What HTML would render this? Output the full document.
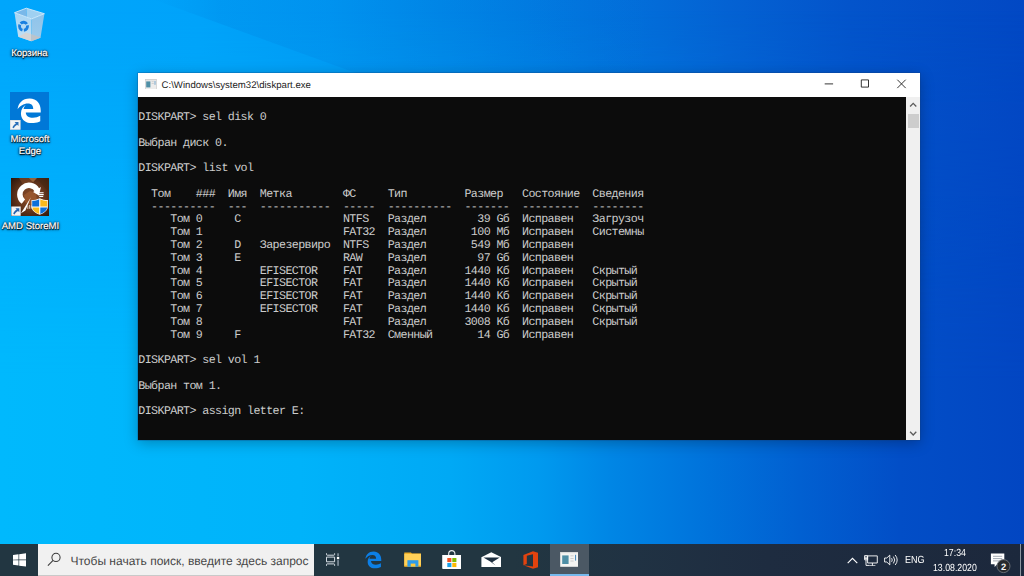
<!DOCTYPE html>
<html lang="ru">
<head>
<meta charset="utf-8">
<title>diskpart</title>
<style>
*{box-sizing:border-box}
html,body{margin:0;padding:0}
body{width:1024px;height:576px;overflow:hidden;position:relative;text-rendering:geometricPrecision;font-family:"Liberation Sans",sans-serif;background:#0a7fdc}
#wall{position:absolute;left:0;top:0;width:1024px;height:576px;
 background:linear-gradient(90deg,rgb(0,166,252) 0,rgb(0,163,250) 200px,rgb(0,153,244) 330px,rgb(0,137,233) 440px,rgb(2,116,221) 590px,rgb(4,98,211) 728px,rgb(3,84,203) 850px,rgb(2,72,196) 1024px)}
#wall2{position:absolute;left:0;top:0;width:1024px;height:576px;
 background:linear-gradient(90deg,rgb(0,185,253) 0,rgb(0,179,250) 300px,rgb(0,169,245) 450px,rgb(0,154,239) 538px,rgb(0,134,229) 610px,rgb(0,116,220) 700px,rgb(1,96,209) 800px,rgb(2,78,199) 900px,rgb(2,70,194) 1024px);
 -webkit-mask-image:linear-gradient(180deg,transparent 10px,#000 380px);mask-image:linear-gradient(180deg,transparent 10px,#000 380px)}
.abs{position:absolute}
#ray1{position:absolute;left:0;top:0;width:1024px;height:80px;clip-path:polygon(155px 0,375px 80px,660px 80px,660px 0);background:linear-gradient(90deg,rgba(0,60,170,0) 150px,rgba(0,60,170,.085) 220px,rgba(0,60,170,.06) 400px,rgba(0,60,170,0) 660px)}
/* desktop icons */
.dlabel{position:absolute;color:#fff;font-size:9.6px;line-height:12px;text-align:center;white-space:nowrap;
 text-shadow:0.5px 0.8px 1px #000,0 0 1.5px rgba(0,0,20,.95),0 0 2.5px rgba(0,0,30,.8),0 1px 3px rgba(0,0,30,.6);-webkit-text-stroke:0.2px #fff}
/* window */
#win{position:absolute;left:138px;top:72.5px;width:782.2px;height:367.7px;background:#0c0c0c;box-shadow:0 0 0 0.5px rgba(20,60,120,.5),0 3px 13px rgba(0,0,0,.27)}
#tbar{position:absolute;left:0;top:0;width:100%;height:24.3px;background:#fff}
#title{position:absolute;left:23.6px;top:7.1px;font-size:9.6px;line-height:12px;color:#1c1c1c;white-space:nowrap}
#con{position:absolute;left:0;top:24.3px;width:768px;height:343.4px;background:#0c0c0c;overflow:hidden}
#con .r{position:absolute;left:0.3px;height:13px;line-height:13px;font-family:"Liberation Mono",monospace;font-size:11.68px;letter-spacing:-0.609px;color:#ccc;white-space:pre;margin:0}
#sb{position:absolute;right:0;top:24.3px;width:14.2px;height:343.4px;background:#f0f0f0}
#thumb{position:absolute;left:1.7px;top:17.6px;width:11px;height:13.2px;background:#cdcdcd}
/* taskbar */
#task{position:absolute;left:0;top:544px;width:1024px;height:32px;background:linear-gradient(90deg,#223641 0%,#223641 50%,#203243 62%,#1e2c40 75%,#1c283c 100%)}
#search{position:absolute;left:38.4px;top:0.4px;width:275.2px;height:31.6px;background:#f1f1f1;border-bottom:1px solid #c9c9c9}
#stext{position:absolute;left:32.1px;top:9.3px;font-size:12px;line-height:15px;color:#474747;white-space:nowrap}
#active{position:absolute;left:550.3px;top:0;width:38.7px;height:32px;background:#4b5864}
#active i{position:absolute;left:0;bottom:0;width:100%;height:2px;background:#76b9ed}
.tray{position:absolute;color:#fff;font-size:10.3px;line-height:11px;white-space:nowrap;transform-origin:0 50%}
</style>
</head>
<body>
<div id="wall"></div><div id="wall2"></div>
<div id="ray1"></div>

<!-- DESKTOP ICONS -->
<div id="desk">
 <!-- recycle bin -->
 <svg class="abs" style="left:12px;top:6px" width="36" height="37" viewBox="12 6 36 37">
  <defs><linearGradient id="rbL" x1="0" y1="0" x2="0" y2="1"><stop offset="0" stop-color="#a6d4f3"/><stop offset="1" stop-color="#c3e1f5"/></linearGradient>
  <linearGradient id="rbR" x1="0" y1="0" x2="0" y2="1"><stop offset="0" stop-color="#8ec3ea"/><stop offset="1" stop-color="#9ecbeb"/></linearGradient></defs>
  <path fill="#79b8e9" d="M14.5 12.7L26.3 8.2 27 17.200z"/>
  <path fill="#9fd0f1" d="M26.3 8.2L44.4 13.7 31.5 18.9 27 17.200z"/>
  <path fill="url(#rbL)" d="M14.5 12.7L31.5 18.9 31.3 41.2 18.2 36.7z"/>
  <path fill="url(#rbR)" d="M31.5 18.9L44.4 13.7 40.500 37.700 31.3 41.2z"/>
  <path fill="#d3d5d7" d="M18.3 36.700L26 32.600 31.400 34.300 31.300 41.200z"/>
  <path fill="#bcc3ca" d="M31.300 34.300L40.300 37.300 40.500 37.700 31.300 41.200z"/>
  <path fill="none" stroke="#d3eafa" stroke-width="0.9" stroke-linejoin="round" d="M14.5 12.7L26.3 8.2 44.4 13.7 31.5 18.900z"/>
  <g fill="none" stroke="#1a80e0" stroke-width="2.9"><path d="M20.67 23.47A4.0 4.0 0 0 1 26.78 24.01"/><path d="M27.36 25.26A4.0 4.0 0 0 1 23.85 30.28"/><path d="M22.46 30.16A4.0 4.0 0 0 1 19.87 24.61"/></g>
 </svg>
 <div class="dlabel" style="left:-0.6px;width:60px;top:47.6px">Корзина</div>
 <!-- edge -->
 <div class="abs" style="left:10.4px;top:92.1px;width:38.5px;height:37.7px;background:#0078d7"></div>
 <svg class="abs" style="left:17.2px;top:98.4px" width="24.3" height="25.1" viewBox="0 0 100 104"><path fill="#fff" d="M2 47C5 22 22 2 52 2c30 0 46 22 46 50v8H36c1 14 12 22 30 22 11 0 21-3 30-8v22c-10 5-22 8-36 8-28 0-44-17-44-40 0-17 9-30 24-38-8 5-12 13-13 20h40c0-14-7-23-22-23C27 23 12 33 2 47z"/></svg>
 <svg class="abs" style="left:10.4px;top:120.1px" width="10.4" height="9.7" viewBox="0 0 10.4 9.7"><rect width="10.4" height="9.7" fill="#f2f4f6"/><rect x="0.25" y="0.25" width="9.9" height="9.2" fill="none" stroke="#c9ced3" stroke-width="0.5"/><path fill="#2b6fb8" d="M4.6 2.1h3.9v3.9L7.2 4.8C5.6 5.6 4.6 6.6 3.9 8.3L2.4 7.6C3.2 5.6 4.2 4.4 5.9 3.4z"/></svg>
 <div class="dlabel" style="left:0;width:60px;top:134.4px">Microsoft<br>Edge</div>
 <!-- AMD StoreMI -->
 <svg class="abs" style="left:10.6px;top:178.4px" width="38.3" height="38.1" viewBox="0 0 38.3 38.1">
  <defs><radialGradient id="amdbg" cx="0.52" cy="0.5" r="0.7"><stop offset="0" stop-color="#8d4f2c"/><stop offset="0.45" stop-color="#6b3a1f"/><stop offset="1" stop-color="#2a150b"/></radialGradient></defs>
  <rect width="38.3" height="38.1" fill="url(#amdbg)"/>
  <path fill="#a87044" d="M17.5 0h8.5l-4 4.200z" opacity=".8"/><path fill="#7a4424" d="M8 0h9.500l4.500 4.200-9 4z" opacity=".7"/><path fill="#4a2a14" d="M26 0h12.300v14l-6-6z" opacity=".6"/>
  <path fill="#9c5a30" d="M13 17l6-4 6 2 1 8-7 4-5-3z" opacity=".75"/>
  <path fill="none" stroke="#fff" stroke-width="5.50" d="M12.37 23.71A9.15 9.15 0 1 1 26.08 12.20"/><path fill="#fff" d="M29.96 9.03L27.90 17.54L22.07 13.96z"/>
  <path fill="#fff" d="M10 35.200L19.900 19.200 14.400 32.600z"/>
  <path stroke="#fff" stroke-width="1.100" d="M27.800 14.700h4.800M27.500 16.600h5.200M28.200 18.500h4"/>
  <path stroke="#f0e6dc" stroke-width="0.800" d="M16.800 27.500v3.600M18.600 27v3.800M20.300 27.500v3.200"/>
  <path fill="#fff" d="M28.700 20.300c2.500 1.300 5.200 1.800 8.200 1.800v6.200c0 4-3.200 6.800-8.200 8.400-5-1.600-8.200-4.400-8.200-8.400v-6.200c3 0 5.700-.5 8.200-1.800z"/>
  <path fill="#0b6fd9" d="M28.200 21.200v7.200h-7v-5.700c2.600 0 4.800-.500 7-1.500zM29.300 29.400h6.900c-.4 3-2.900 5-6.900 6.500z"/>
  <path fill="#f9b91c" d="M29.300 21.200c2.200 1 4.400 1.500 7 1.500v5.700h-7zM28.200 29.400v6.500c-4-1.500-6.500-3.500-6.900-6.500z"/>
  <rect x="0.300" y="28.500" width="9.400" height="9.300" fill="#f2f4f6"/><path fill="#2a64ad" d="M4.400 30.300h3.900v3.900L7 33C5.400 33.800 4.400 34.800 3.700 36.500L2.200 35.800C3 33.800 4 32.600 5.700 31.600z"/>
 </svg>
 <div class="dlabel" style="left:0;width:61px;top:221px">AMD StoreMI</div>
</div>

<!-- WINDOW -->
<div id="win">
 <div id="tbar">
  <svg class="abs" style="left:7px;top:6px" width="12" height="10.6" viewBox="0 0 12 10.6"><rect x="0.2" y="0.2" width="11.600" height="10.2" fill="#ececec" stroke="#b8b8b8" stroke-width="0.4"/><rect x="0.4" y="0.400" width="11.200" height="0.800" fill="#d0d0d0"/><rect x="1.200" y="2.400" width="4.200" height="6" fill="#4f8fa6"/><rect x="6.600" y="2.400" width="2.200" height="0.700" fill="#c4c4c4"/><rect x="6.600" y="4.200" width="2.200" height="0.700" fill="#c4c4c4"/><rect x="9.600" y="2" width="0.800" height="3.800" fill="#5a96c4"/></svg>
  <div id="title">C:\Windows\system32\diskpart.exe</div>
  <svg class="abs" style="left:680px;top:-0.5px" width="102" height="24" viewBox="0 0 102 24"><g fill="none" stroke="#1f1f1f" stroke-width="0.9"><path d="M6.7 11.900h8.400"/><path d="M43.300 7.900h7.200v7.200h-7.200z"/><path d="M79.300 7.700l8.400 8.400M87.700 7.700l-8.400 8.400"/></g></svg>
 </div>
 <div id="con">
<div class="r" style="top:14.2px">DISKPART&gt; sel disk 0</div>
<div class="r" style="top:40.2px">Выбран диск 0.</div>
<div class="r" style="top:65.2px">DISKPART&gt; list vol</div>
<div class="r" style="top:91.2px">  Том    ###  Имя  Метка        ФС     Тип         Размер   Состояние  Сведения</div>
<div class="r" style="top:104.2px">  ----------  ---  -----------  -----  ----------  -------  ---------  --------</div>
<div class="r" style="top:116.2px">     Том 0     C                NTFS   Раздел        39 Gб  Исправен   Загрузоч</div>
<div class="r" style="top:129.2px">     Том 1                      FAT32  Раздел       100 Mб  Исправен   Системны</div>
<div class="r" style="top:142.2px">     Том 2     D   Зарезервиро  NTFS   Раздел       549 Mб  Исправен</div>
<div class="r" style="top:155.2px">     Том 3     E                RAW    Раздел        97 Gб  Исправен</div>
<div class="r" style="top:168.2px">     Том 4         EFISECTOR    FAT    Раздел      1440 Kб  Исправен   Скрытый</div>
<div class="r" style="top:180.2px">     Том 5         EFISECTOR    FAT    Раздел      1440 Kб  Исправен   Скрытый</div>
<div class="r" style="top:193.2px">     Том 6         EFISECTOR    FAT    Раздел      1440 Kб  Исправен   Скрытый</div>
<div class="r" style="top:206.2px">     Том 7         EFISECTOR    FAT    Раздел      1440 Kб  Исправен   Скрытый</div>
<div class="r" style="top:219.2px">     Том 8                      FAT    Раздел      3008 Kб  Исправен   Скрытый</div>
<div class="r" style="top:232.2px">     Том 9     F                FAT32  Сменный       14 Gб  Исправен</div>
<div class="r" style="top:257.2px">DISKPART&gt; sel vol 1</div>
<div class="r" style="top:283.2px">Выбран том 1.</div>
<div class="r" style="top:308.2px">DISKPART&gt; assign letter E:</div>
</div>
 <div id="sb"><div id="thumb"></div><svg class="abs" style="left:0;top:0" width="14.2" height="343.4" viewBox="0 0 14.2 343.4"><g fill="none" stroke="#5c5c5c" stroke-width="1.3"><path d="M4.1 9.400l3.100-3.200 3.100 3.200"/><path d="M4.100 334.900l3.100 3.200 3.100-3.200"/></g></svg></div>
</div>

<!-- TASKBAR -->
<div id="task">
 <!-- start -->
 <svg class="abs" style="left:12.7px;top:9.1px" width="13.5" height="13.8" viewBox="0 0 87.3 87.6"><path fill="#fff" d="M0 12.4l35.7-4.9v34.5l-35.7.2zM35.7 45.9v34.5L0 75.5V45.7zM40 6.9L87.3 0v41.5l-47.3.4zM87.3 46.3v41.3L40 80.9V46z"/></svg>
 <div id="search">
  <svg class="abs" style="left:8px;top:6px" width="20" height="20" viewBox="0 0 20 20"><circle cx="10" cy="7.4" r="4.1" fill="none" stroke="#3b3b3b" stroke-width="1.05"/><path d="M7.1 10.4L1.9 15.7" stroke="#3b3b3b" stroke-width="1.1" fill="none"/></svg>
  <div id="stext">Чтобы начать поиск, введите здесь запрос</div>
 </div>
 <!-- task view -->
 <svg class="abs" style="left:325px;top:9px" width="15" height="14" viewBox="0 0 15 14"><g fill="none" stroke="#dfe6ec" stroke-width="0.95"><path d="M1.5 4.1h8.1v4.7H1.5z"/><path d="M1.5 0.3v1.2q0 0.7 0.7 0.7h6.7q0.7 0 0.7-0.7V0.3M1.5 12.8v-1.2q0-0.7 0.7-0.7h6.7q0.7 0 0.7 0.7v1.2"/></g><rect x="12.2" y="0.3" width="1.7" height="2.900" fill="#7f8e9b"/><rect x="12.2" y="7.100" width="1.700" height="5.700" fill="#7f8e9b"/><rect x="11.900" y="3.900" width="2.300" height="2.300" fill="#fff"/></svg>
 <!-- edge -->
 <svg class="abs" style="left:365.4px;top:7.2px" width="16.6" height="17.4" viewBox="0 0 100 104"><path fill="#0c7fe6" d="M2 47C5 22 22 2 52 2c30 0 46 22 46 50v8H36c1 14 12 22 30 22 11 0 21-3 30-8v22c-10 5-22 8-36 8-28 0-44-17-44-40 0-17 9-30 24-38-8 5-12 13-13 20h40c0-14-7-23-22-23C27 23 12 33 2 47z"/></svg>
 <!-- explorer -->
 <svg class="abs" style="left:403.8px;top:8.3px" width="17.6" height="15" viewBox="0 0 17.6 15"><path fill="#f0ab1e" d="M0.3 0.5h6.700l0.900 1.100h9.500v13H0.300z"/><path fill="#ffd058" d="M0.300 1.800h17.100v12.100H0.300z"/><path fill="#f3b325" d="M0.300 13.400h17.100v1.200H0.300z"/><path fill="#2c9bea" d="M3.400 8.200h11v6.500H3.400z"/><path fill="#ffc83a" d="M6.700 11.600h4.700v3H6.700z"/></svg>
 <!-- store -->
 <svg class="abs" style="left:441.8px;top:5.8px" width="19.6" height="19.6" viewBox="0 0 19.6 19.6"><path d="M6.7 5.4V3.7a3.1 3.1 0 0 1 6.2 0v1.7" fill="none" stroke="#e9edf0" stroke-width="1.1"/><path fill="#fff" d="M0.2 4.9h19.2v12.8a1.6 1.6 0 0 1-1.6 1.6H1.8a1.6 1.6 0 0 1-1.6-1.6z"/><rect x="5.3" y="8" width="4.1" height="4.1" fill="#f25022"/><rect x="10.3" y="8" width="4.1" height="4.1" fill="#7fba00"/><rect x="5.3" y="13" width="4.1" height="4.1" fill="#1ba1e8"/><rect x="10.3" y="13" width="4.1" height="4.1" fill="#ffb900"/></svg>
 <!-- mail -->
 <svg class="abs" style="left:480.8px;top:7.6px" width="20.6" height="15.8" viewBox="0 0 20.6 15.8"><path fill="#fff" d="M0.4 5.2L10.3 0.2l9.9 5v10.4H0.4z"/><path fill="#1f3040" d="M2.4 5.6h16.4l-7.6 4.6 3.4 3.4-5.4-4z"/></svg>
 <!-- office -->
 <svg class="abs" style="left:522.8px;top:6.8px" width="15.6" height="18" viewBox="0 0 15.6 18"><path fill="#e2430f" d="M0.4 14.2V3.9L10 0.3l5.2 1.6v14.2L10 17.7 0.4 14.2l9.6 1.2V3.2L3.8 4.7v8.2z"/></svg>
 <div id="active"><i></i>
  <svg class="abs" style="left:9.6px;top:8px" width="18.4" height="15" viewBox="0 0 18.4 15"><rect x="0.2" y="0.2" width="18" height="14.6" fill="#f4f4f2"/><rect x="0.2" y="0.2" width="18" height="1" fill="#dcdcdc"/><rect x="2.2" y="3.4" width="6.4" height="8.6" fill="#4f8fa6"/><rect x="10.4" y="3.4" width="3.2" height="0.9" fill="#c9c9c9"/><rect x="10.4" y="6" width="3.2" height="0.9" fill="#c9c9c9"/><rect x="10.4" y="8.6" width="3.2" height="0.9" fill="#c9c9c9"/><rect x="15" y="2.8" width="1.1" height="5.8" fill="#4f8fc0"/></svg>
 </div>
 <!-- tray -->
 <svg class="abs" style="left:846.6px;top:12.6px" width="11" height="7" viewBox="0 0 11 7"><path d="M0.7 6.2L5.5 1.3l4.8 4.9" fill="none" stroke="#fff" stroke-width="1.1"/></svg>
 <svg class="abs" style="left:864.4px;top:10.6px" width="14" height="11.6" viewBox="0 0 14 11.6"><g fill="none" stroke="#fff" stroke-width="0.9"><path d="M3.6 0.9h9.7v7.1H3.6z"/><path d="M8.4 8v2.6M5.6 10.8h5.8"/><path d="M0.6 0.6h3v4.2h-3zM0.6 2.2h3M0.6 3.6h3M2 4.8v5.6h3.6"/></g></svg>
 <svg class="abs" style="left:883.6px;top:10px" width="14" height="12" viewBox="0 0 14 12"><g fill="none" stroke="#fff" stroke-width="0.9"><path d="M0.6 4h2.2l3-2.9v9.8l-3-2.9H0.6z"/><path d="M7.6 4.2a3 3 0 0 1 0 3.6M9.4 2.6a5.4 5.4 0 0 1 0 6.8M11.2 1a8 8 0 0 1 0 10"/></g></svg>
 <div class="tray" style="left:904.6px;top:11.3px;transform:scaleX(0.875)">ENG</div>
 <div class="tray" style="left:944.4px;top:4.3px;transform:scaleX(0.85)">17:34</div>
 <div class="tray" style="left:933.2px;top:18.7px;transform:scaleX(0.85)">13.08.2020</div>
 <svg class="abs" style="left:990px;top:8.6px" width="21" height="21" viewBox="0 0 21 21"><path fill="#fff" d="M0.9 0.6h13.4v10.7H7.2L4.6 13.9v-2.6H0.9z"/><path stroke="#8a94a0" stroke-width="0.8" d="M3 3.300h9.200M3 5.600h9.200M3 7.900h9.200"/><circle cx="13.500" cy="13.100" r="6.500" fill="#26292d" stroke="#6e747b" stroke-width="0.9"/><text x="13.5" y="16.5" text-anchor="middle" font-family="Liberation Sans, sans-serif" font-weight="bold" font-size="9.4" fill="#f4f4f4">2</text></svg>
 <div class="abs" style="left:1020.2px;top:0;width:0.8px;height:32px;background:#8c96a0"></div>
</div>
</body>
</html>
